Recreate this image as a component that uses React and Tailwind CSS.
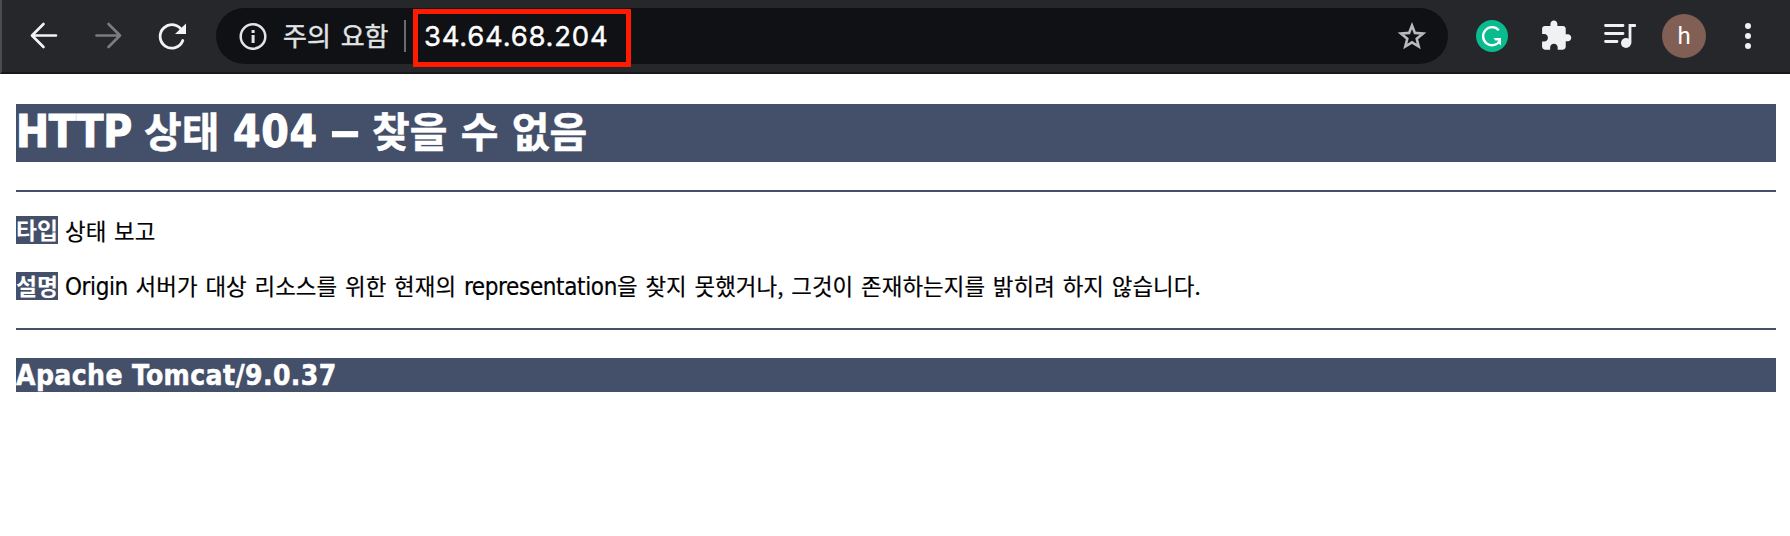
import React from "react";

const latin = "font-['DejaVu_Sans_Condensed','DejaVu_Sans',sans-serif] [font-stretch:condensed]";
const korean = "font-['Noto_Sans_CJK_KR',sans-serif]";

function Toolbar() {
  return (
    <header className="flex h-[74px] items-center border-b-2 border-l-2 border-b-[#17181b] border-l-[#4b4c4f] bg-[#26272b] text-[#f1f3f4]">
      <svg className="ml-[25px] size-[34px] shrink-0" viewBox="0 0 34 34" fill="none" stroke="#f1f3f4" strokeWidth="2.6" strokeLinecap="round" strokeLinejoin="round">
        <path d="M29 16.5H6M16.5 5L5 16.5L16.5 28" />
      </svg>
      <svg className="ml-[30px] size-[34px] shrink-0" viewBox="0 0 34 34" fill="none" stroke="#7b7c80" strokeWidth="2.6" strokeLinecap="round" strokeLinejoin="round">
        <path d="M5.5 16.5H28.5M17.5 5L29 16.5L17.5 28" />
      </svg>
      <svg className="ml-[30px] size-[34px] shrink-0" viewBox="0 0 34 34">
        <path d="M27.3 12.2A11.7 11.7 0 1 0 27.8 21.5" fill="none" stroke="#f1f3f4" strokeWidth="2.8" strokeLinecap="round" />
        <path d="M31 4.5V15H20Z" fill="#f1f3f4" />
      </svg>

      <div className="ml-[27px] flex h-14 w-[1232px] shrink-0 items-center rounded-full bg-[#101114]">
        <svg className="ml-[23px] size-7 shrink-0" viewBox="0 0 28 28">
          <circle cx="14" cy="14.5" r="12.3" fill="none" stroke="#e3e4e6" strokeWidth="2.5" />
          <path d="M12.6 8h3v3h-3zM12.6 13h3v8h-3z" fill="#e3e4e6" />
        </svg>
        <span className={`ml-4 w-[112px] shrink-0 whitespace-nowrap pb-0.5 text-[26px] leading-[52px] text-[#e3e4e6] [-webkit-text-stroke:0.4px_#e3e4e6] [word-spacing:4px] ${korean}`}>주의 요함</span>
        <span className="ml-[9px] h-8 w-0.5 shrink-0 bg-[#6b6c6f]" />
        <div className="ml-[7px] mt-[4px] flex h-[58px] w-[218px] shrink-0 items-center border-[5px] border-[#ff1a00]">
          <span className="ml-[6px] -mt-[4px] whitespace-nowrap font-['Inter',sans-serif] text-[27.5px] leading-8 tracking-[0.75px] text-white [-webkit-text-stroke:0.4px_white]">34.64.68.204</span>
        </div>
        <svg className="ml-auto mr-5 size-[32px] shrink-0" viewBox="0 0 32 32" fill="none" stroke="#b9babc" strokeWidth="2.6">
          <path d="M16 5.5L18.9 12.9L27 13.5L20.7 18.7L22.7 26.5L16 22.3L9.3 26.5L11.3 18.7L5 13.5L13.1 12.9Z" />
        </svg>
      </div>

      <svg className="ml-7 size-8 shrink-0" viewBox="0 0 32 32">
        <circle cx="16" cy="16" r="16" fill="#0abb8f" />
        <path d="M22.8 10.2A9 9 0 1 0 24 20.5" fill="none" stroke="#fff" strokeWidth="2.3" />
        <path d="M17.5 18H25V25.5L22.4 23V20.4H19.3Z" fill="#fff" />
      </svg>
      <svg className="ml-[32px] size-8 shrink-0" viewBox="0.5 0.7 23 23" fill="#eff1f2">
        <path d="M20.5 11H19V7c0-1.1-.9-2-2-2h-4V3.5C13 2.12 11.88 1 10.5 1S8 2.12 8 3.5V5H4c-1.1 0-1.99.9-1.99 2v3.8H3.5c1.49 0 2.7 1.21 2.7 2.7s-1.21 2.7-2.7 2.7H2V20c0 1.1.9 2 2 2h3.8v-1.5c0-1.49 1.21-2.7 2.7-2.7 1.49 0 2.7 1.21 2.7 2.7V22H17c1.1 0 2-.9 2-2v-4h1.5c1.38 0 2.5-1.12 2.5-2.5S21.88 11 20.5 11z" />
      </svg>
      <svg className="ml-[32px] size-8 shrink-0" viewBox="0 0 32 32" fill="none" stroke="#eff1f2" strokeWidth="2.8" strokeLinecap="round">
        <path d="M1.5 5.5H19M1.5 13.5H19M1.5 21.5H13M26 23V5.5H31" />
        <circle cx="22" cy="23" r="5" fill="#eff1f2" stroke="none" />
      </svg>
      <span className="ml-[26px] flex size-11 shrink-0 items-center justify-center rounded-full bg-[#815f54] font-['Roboto',sans-serif] text-2xl text-white">h</span>
      <svg className="ml-[26px] size-8 shrink-0" viewBox="0 0 32 32" fill="#eff1f2">
        <circle cx="16" cy="6" r="3" />
        <circle cx="16" cy="16" r="3" />
        <circle cx="16" cy="26" r="3" />
      </svg>
    </header>
  );
}

function Row({ label, children }) {
  return (
    <div className="flex h-7 items-center whitespace-nowrap text-[22.4px] leading-7 text-black">
      <b className={`mr-[7px] h-7 w-[42px] shrink-0 bg-[#444f69] text-[22.8px] text-white ${korean}`}>{label}</b>
      <span className={`tracking-[0.08px] [-webkit-text-stroke:0.2px_black] [word-spacing:2.65px] ${korean}`}>{children}</span>
    </div>
  );
}

export default function App() {
  return (
    <div className="h-[536px] w-[1790px] overflow-hidden bg-white">
      <Toolbar />
      <main className="mx-4 mr-[14px] pt-[30px]">
        <h1 className={`flex h-[58px] whitespace-pre bg-[#444f69] text-[41px] font-bold leading-[50px] text-white [-webkit-text-stroke:0.5px_white] ${korean}`}>
          <span className={`w-[128px] shrink-0 text-[44px] leading-[56px] tracking-[-0.3px] [-webkit-text-stroke:1px_white] ${latin}`}>HTTP </span>
          <span className="w-[89px] shrink-0">상태 </span>
          <span className={`w-[96px] shrink-0 text-[44px] leading-[56px] tracking-[0.7px] [-webkit-text-stroke:1px_white] ${latin}`}>404 </span>
          <span className={`w-[43px] shrink-0 text-[44px] leading-[54px] [-webkit-text-stroke:0.6px_white] ${latin}`}>
            <span className="inline-block origin-left scale-x-[1.62]">–</span>
          </span>
          <span className="[word-spacing:4px]">찾을 수 없음</span>
        </h1>
        <hr className="mt-7 h-0.5 border-0 bg-[#444f69]" />
        <div className="mt-6 flex flex-col gap-7">
          <Row label="타입">상태 보고</Row>
          <Row label="설명">
            <span className={`text-[24px] tracking-[-0.4px] ${latin}`}>Origin</span> 서버가 대상 리소스를 위한 현재의{" "}
            <span className={`text-[24px] tracking-[-0.37px] ${latin}`}>representation</span>을 찾지 못했거나, 그것이 존재하는지를 밝히려 하지 않습니다.
          </Row>
        </div>
        <hr className="mt-7 h-0.5 border-0 bg-[#444f69]" />
        <h3 className={`mt-7 h-[34px] whitespace-nowrap bg-[#444f69] text-[28px] font-bold leading-[36px] tracking-[0.4px] text-white [-webkit-text-stroke:0.5px_white] ${latin}`}>Apache Tomcat/9.0.37</h3>
      </main>
    </div>
  );
}
